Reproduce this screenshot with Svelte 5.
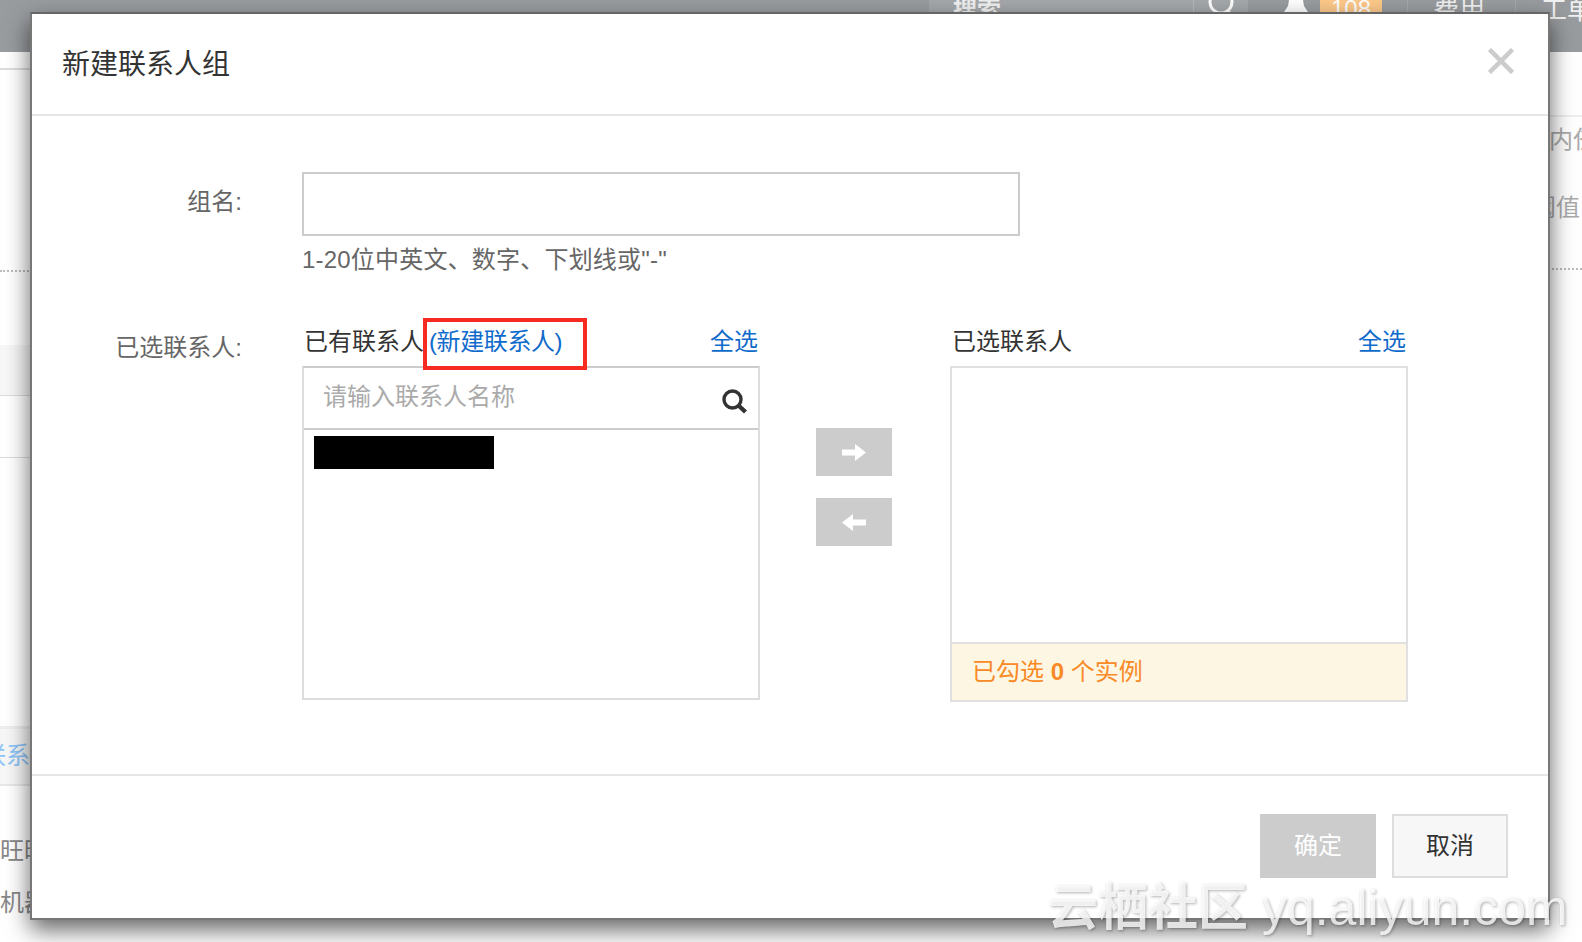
<script lang="ts">
  // Static "new contact group" dialog over the dimmed console page.
  let groupName = $state('')
  let keyword = $state('')
  let selectedCount = $state(0)
</script>

<div class="page">
  <header class="topbar">
    <div class="search-strip">搜索</div>
    <div class="icon-box">
      <svg width="30" height="30" viewBox="0 0 30 30" fill="none" stroke="#fff" stroke-width="3">
        <circle cx="15" cy="2" r="11" />
        <path d="M22 11l5 6" />
      </svg>
    </div>
    <div class="bell">
      <svg width="24" height="12" viewBox="0 0 24 12" fill="#fff">
        <path d="M5 0h14l1 6 4 6H0l4-6z" />
      </svg>
    </div>
    <div class="badge">108</div>
    <div class="nav-item cost">费用</div>
    <div class="nav-item">工单</div>
  </header>

  <div class="backdrop">
    <div class="side left">
      <div class="line first"></div>
      <div class="dots d1"></div>
      <div class="grey-row"></div>
      <div class="line second"></div>
      <div class="tab-row"><span>联系</span></div>
      <div class="side-text t1">旺旺</div>
      <div class="side-text t2">机器</div>
    </div>
    <div class="side right">
      <div class="line r-line"></div>
      <div class="side-text r1">内任</div>
      <div class="side-text r2">阈值</div>
      <div class="dots d2"></div>
    </div>
  </div>

  <div class="modal">
    <div class="modal-head">
      <h2>新建联系人组</h2>
      <svg class="close" width="26" height="26" viewBox="0 0 26 26" stroke="#ccc" stroke-width="4.5">
        <path d="M1.500 1.500l23 23M24.500 1.500l-23 23" />
      </svg>
    </div>

    <div class="modal-body">
      <div class="form-row name-row">
        <div class="label">组名:</div>
        <div>
          <input class="name-input" type="text" bind:value={groupName} />
          <div class="hint">1-20位中英文、数字、下划线或"-"</div>
        </div>
      </div>

      <div class="form-row contacts-row">
        <div class="label">已选联系人:</div>
        <div class="transfer">
          <div class="pane">
            <div class="pane-head">
              <span class="pane-title">已有联系人<a href="#new" class="new-link">(新建联系人)</a></span>
              <a href="#all" class="all">全选</a>
              <span class="mark"></span>
            </div>
            <div class="box list">
              <div class="search">
                <input type="text" placeholder="请输入联系人名称" bind:value={keyword} />
                <svg width="26" height="25" viewBox="0 0 26 25" fill="none" stroke="#333">
                  <circle cx="10.500" cy="10.500" r="8.500" stroke-width="3.400" />
                  <path d="M16.500 16.500l7 6.500" stroke-width="4.400" />
                </svg>
              </div>
              <div class="redacted"></div>
            </div>
          </div>

          <div class="arrows">
            <button type="button" aria-label="add">
              <svg width="24" height="17" viewBox="0 0 24 17" fill="#fff">
                <path d="M0 5.500h13V0l11 8.500-11 8.500v-5.500H0z" />
              </svg>
            </button>
            <button type="button" aria-label="remove">
              <svg width="24" height="17" viewBox="0 0 24 17" fill="#fff">
                <path d="M24 5.500H11V0L0 8.500 11 17v-5.500h13z" />
              </svg>
            </button>
          </div>

          <div class="pane">
            <div class="pane-head">
              <span class="pane-title">已选联系人</span>
              <a href="#all" class="all">全选</a>
            </div>
            <div class="box picked">
              <div class="picked-list"></div>
              <div class="count">已勾选 <b>{selectedCount}</b> 个实例</div>
            </div>
          </div>
        </div>
      </div>
    </div>

    <div class="modal-foot">
      <button type="button" class="btn ok">确定</button>
      <button type="button" class="btn cancel">取消</button>
    </div>
  </div>

  <div class="watermark">云栖社区 <span>yq.aliyun.com</span></div>
</div>

<style>
  :global(body) {
    margin: 0;
    background: #fff;
  }
  .page {
    position: relative;
    width: 1582px;
    height: 942px;
    overflow: hidden;
    font-family: "Liberation Sans", "Noto Sans CJK SC", sans-serif;
    font-size: 24px;
    color: #333;
  }

  /* dimmed page behind the dialog */
  .topbar {
    display: flex;
    height: 52px;
    overflow: hidden;
    padding-left: 929px;
    box-sizing: border-box;
    background: #999c9f;
    color: #f0f0f0;
    line-height: 20px;
  }
  .topbar > * {
    flex: none;
  }
  .topbar svg {
    display: block;
  }
  .search-strip {
    width: 265px;
    padding-left: 24px;
    box-sizing: border-box;
    background: #a4a8aa;
    font-weight: 700;
    border-right: 1px solid #b5b8ba;
  }
  .icon-box {
    width: 54px;
    background: #a4a8aa;
    display: flex;
    justify-content: center;
  }
  .bell {
    margin-left: 36px;
    width: 24px;
  }
  .badge {
    margin-left: 12px;
    width: 62px;
    height: 52px;
    background: #fdc98a;
    color: #fff;
    text-align: center;
    line-height: 18px;
  }
  .nav-item {
    width: 108px;
    padding-left: 25px;
    box-sizing: border-box;
    font-size: 26px;
    border-left: 1px solid #a6a9ab;
  }
  .cost {
    margin-left: 25px;
  }

  .backdrop {
    display: flex;
    justify-content: space-between;
    height: 890px;
    color: #888;
  }
  .side {
    display: flex;
    flex-direction: column;
    width: 60px;
  }
  .right {
    width: 50px;
  }
  .line {
    height: 2px;
    background: #ddd;
  }
  .first {
    margin-top: 16px;
  }
  .dots {
    border-top: 2px dotted #bbb;
  }
  .d1 {
    margin-top: 200px;
  }
  .grey-row {
    margin-top: 73px;
    height: 50px;
    background: #f7f7f7;
    border-bottom: 1px solid #ddd;
  }
  .second {
    margin-top: 61px;
    height: 1px;
  }
  .tab-row {
    margin-top: 268px;
    height: 55px;
    background: #f7f7f7;
    border-top: 3px solid #eee;
    border-bottom: 2px solid #e8e8e8;
    color: #8cc4f7;
    line-height: 54px;
    white-space: nowrap;
    overflow: hidden;
  }
  .tab-row span {
    margin-left: -18px;
  }
  .side-text {
    white-space: nowrap;
    line-height: 32px;
    overflow: hidden;
  }
  .t1 {
    margin-top: 49px;
  }
  .t2 {
    margin-top: 20px;
  }
  .r-line {
    margin-top: 63px;
    background: #eee;
  }
  .r1 {
    margin-top: 7px;
    margin-left: 17px;
    color: #aaa;
  }
  .r2 {
    margin-top: 36px;
    color: #aaa;
  }
  .d2 {
    margin-top: 44px;
  }

  /* dialog */
  .modal {
    position: absolute;
    left: 30px;
    top: 12px;
    width: 1520px;
    height: 908px;
    box-sizing: border-box;
    display: flex;
    flex-direction: column;
    background: #fff;
    border: 2px solid #777;
    border-top-color: #666;
    box-shadow: 0 10px 22px rgba(0, 0, 0, 0.6);
  }
  .modal-head {
    display: flex;
    align-items: center;
    justify-content: space-between;
    height: 100px;
    flex: none;
    padding: 0 34px 0 30px;
    border-bottom: 2px solid #e6e6e6;
  }
  h2 {
    margin: 0 0 5px;
    font-size: 28px;
    font-weight: 400;
    color: #333;
  }
  .close {
    margin-bottom: 6px;
  }
  .modal-body {
    flex: 1;
    padding-top: 56px;
  }
  .form-row {
    display: grid;
    grid-template-columns: 210px 1fr;
    column-gap: 60px;
  }
  .label {
    text-align: right;
    line-height: 32px;
    color: #666;
  }
  .name-row .label {
    padding-top: 14px;
  }
  .contacts-row {
    margin-top: 42px;
  }
  .contacts-row .label {
    padding-top: 14px;
  }
  .name-input {
    display: block;
    width: 718px;
    height: 64px;
    box-sizing: border-box;
    border: 2px solid #ccc;
    outline: none;
    font: inherit;
  }
  .hint {
    margin-top: 8px;
    line-height: 32px;
    color: #666;
    letter-spacing: 0.2px;
  }
  .transfer {
    display: flex;
    align-items: flex-start;
  }
  .pane {
    width: 458px;
  }
  .pane-head {
    position: relative;
    display: flex;
    justify-content: space-between;
    align-items: center;
    height: 48px;
    box-sizing: border-box;
    padding: 0 2px 6px 2px;
  }
  .new-link,
  .all {
    color: #0f6bcb;
    text-decoration: none;
  }
  .new-link {
    margin-left: 5px;
    letter-spacing: -0.4px;
  }
  .mark {
    position: absolute;
    left: 121px;
    top: 0;
    width: 164px;
    height: 52px;
    box-sizing: border-box;
    border: 4px solid #f72b1f;
  }
  .box {
    box-sizing: border-box;
    border: 2px solid #ddd;
    border-top-color: #ccc;
  }
  .list {
    height: 334px;
  }
  .search {
    display: flex;
    align-items: center;
    height: 62px;
    padding: 0 10px 0 19px;
    border-bottom: 2px solid #ccc;
    box-sizing: border-box;
  }
  .search input {
    flex: 1;
    min-width: 0;
    border: none;
    outline: none;
    font: inherit;
    padding: 0;
    margin-bottom: 2px;
  }
  .search input::placeholder {
    color: #aaa;
    opacity: 1;
  }
  .search svg {
    margin-top: 6px;
  }
  .redacted {
    width: 180px;
    height: 33px;
    margin: 6px 0 0 10px;
    background: #000;
  }
  .arrows {
    display: flex;
    flex-direction: column;
    gap: 22px;
    width: 76px;
    margin: 110px 58px 0 56px;
  }
  .arrows button {
    display: flex;
    align-items: center;
    justify-content: center;
    height: 48px;
    padding: 0;
    border: none;
    background: #ccc;
  }
  .picked {
    display: flex;
    flex-direction: column;
    height: 336px;
    border-color: #e0e0e0;
  }
  .picked-list {
    flex: 1;
  }
  .count {
    height: 58px;
    box-sizing: border-box;
    padding-left: 20px;
    line-height: 56px;
    background: #fdf6e3;
    border-top: 2px solid #e0e0e0;
    color: #f98a25;
  }
  .count b {
    font-weight: 700;
  }
  .modal-foot {
    flex: none;
    display: flex;
    justify-content: flex-end;
    gap: 16px;
    height: 144px;
    box-sizing: border-box;
    padding: 38px 40px 0 0;
    border-top: 2px solid #e6e6e6;
  }
  .btn {
    width: 116px;
    height: 64px;
    box-sizing: border-box;
    font: inherit;
    padding: 0 0 6px;
  }
  .ok {
    border: none;
    background: #ccc;
    color: #fff;
  }
  .cancel {
    border: 2px solid #ddd;
    background: #f7f7f7;
    color: #333;
  }

  .watermark {
    position: absolute;
    left: 1048px;
    top: 878px;
    font-size: 50px;
    line-height: 60px;
    white-space: nowrap;
    color: rgba(255, 255, 255, 0.8);
    text-shadow: 1px 1px 3px rgba(0, 0, 0, 0.3);
    font-weight: 700;
  }
  .watermark span {
    font-weight: 400;
    font-size: 50px;
  }
</style>
